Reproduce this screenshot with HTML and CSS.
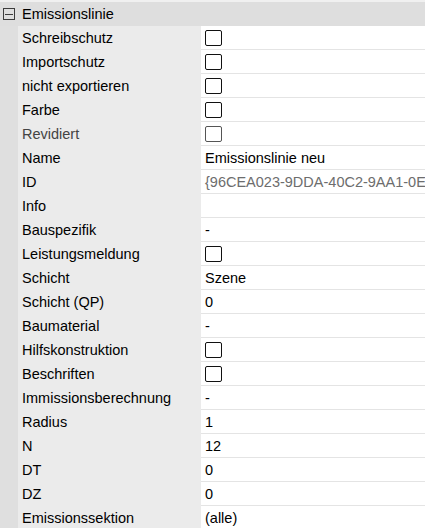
FILE: index.html
```html
<!DOCTYPE html>
<html lang="de">
<head>
<meta charset="utf-8">
<link rel="stylesheet" href="styles.css">
</head>
<body>
<div class="grid">
  <div class="header">
    <span class="toggle"><span class="minus"></span></span>
    <span class="title">Emissionslinie</span>
  </div>
  <div class="row"><div class="gutter"></div><div class="label">Schreibschutz</div><div class="value"><span class="cb"></span></div></div>
  <div class="row"><div class="gutter"></div><div class="label">Importschutz</div><div class="value"><span class="cb"></span></div></div>
  <div class="row"><div class="gutter"></div><div class="label">nicht exportieren</div><div class="value"><span class="cb"></span></div></div>
  <div class="row"><div class="gutter"></div><div class="label">Farbe</div><div class="value"><span class="cb"></span></div></div>
  <div class="row"><div class="gutter"></div><div class="label muted">Revidiert</div><div class="value"><span class="cb disabled"></span></div></div>
  <div class="row"><div class="gutter"></div><div class="label">Name</div><div class="value">Emissionslinie neu</div></div>
  <div class="row"><div class="gutter"></div><div class="label">ID</div><div class="value muted">{96CEA023-9DDA-40C2-9AA1-0E</div></div>
  <div class="row"><div class="gutter"></div><div class="label">Info</div><div class="value"></div></div>
  <div class="row"><div class="gutter"></div><div class="label">Bauspezifik</div><div class="value">-</div></div>
  <div class="row"><div class="gutter"></div><div class="label">Leistungsmeldung</div><div class="value"><span class="cb"></span></div></div>
  <div class="row"><div class="gutter"></div><div class="label">Schicht</div><div class="value">Szene</div></div>
  <div class="row"><div class="gutter"></div><div class="label">Schicht (QP)</div><div class="value">0</div></div>
  <div class="row"><div class="gutter"></div><div class="label">Baumaterial</div><div class="value">-</div></div>
  <div class="row"><div class="gutter"></div><div class="label">Hilfskonstruktion</div><div class="value"><span class="cb"></span></div></div>
  <div class="row"><div class="gutter"></div><div class="label">Beschriften</div><div class="value"><span class="cb"></span></div></div>
  <div class="row"><div class="gutter"></div><div class="label">Immissionsberechnung</div><div class="value">-</div></div>
  <div class="row"><div class="gutter"></div><div class="label">Radius</div><div class="value">1</div></div>
  <div class="row"><div class="gutter"></div><div class="label">N</div><div class="value">12</div></div>
  <div class="row"><div class="gutter"></div><div class="label">DT</div><div class="value">0</div></div>
  <div class="row"><div class="gutter"></div><div class="label">DZ</div><div class="value">0</div></div>
  <div class="row"><div class="gutter"></div><div class="label">Emissionssektion</div><div class="value">(alle)</div></div>
</div>
</body>
</html>
```
FILE: styles.css
```css
html, body {
  margin: 0;
  padding: 0;
  background: #f0f0f0;
  overflow: hidden;
}
.grid {
  padding-top: 2px;
  font-family: "Liberation Sans", Arial, sans-serif;
  font-size: 14.5px;
  color: #000;
  width: 425px;
}
.header {
  height: 24px;
  background: #dedede;
  display: flex;
  align-items: center;
}
.toggle {
  width: 10px;
  height: 10px;
  margin-left: 3px;
  border: 1px solid #3c3c3c;
  display: flex;
  align-items: center;
  justify-content: center;
  box-sizing: content-box;
}
.minus {
  width: 8px;
  height: 1px;
  background: #3c3c3c;
}
.title {
  margin-left: 7px;
}
.row {
  display: flex;
  height: 24px;
}
.gutter {
  width: 18px;
  background: #dfdfdf;
  flex: none;
}
.label {
  width: 183px;
  flex: none;
  background: #ebebeb;
  padding-left: 4px;
  box-sizing: border-box;
  display: flex;
  align-items: center;
  white-space: nowrap;
}
.value {
  flex: 1;
  min-width: 0;
  background: #fff;
  border-bottom: 1px solid #e4e4e4;
  padding-left: 4px;
  display: flex;
  align-items: center;
  white-space: nowrap;
  overflow: hidden;
}
.muted {
  color: #6d6d6d;
}
.label.muted {
  color: #444;
}
.cb {
  width: 15px;
  height: 14px;
  border: 1.5px solid #111;
  border-radius: 2px;
  background: #fff;
  flex: none;
}
.cb.disabled {
  border-color: #555;
}
```
